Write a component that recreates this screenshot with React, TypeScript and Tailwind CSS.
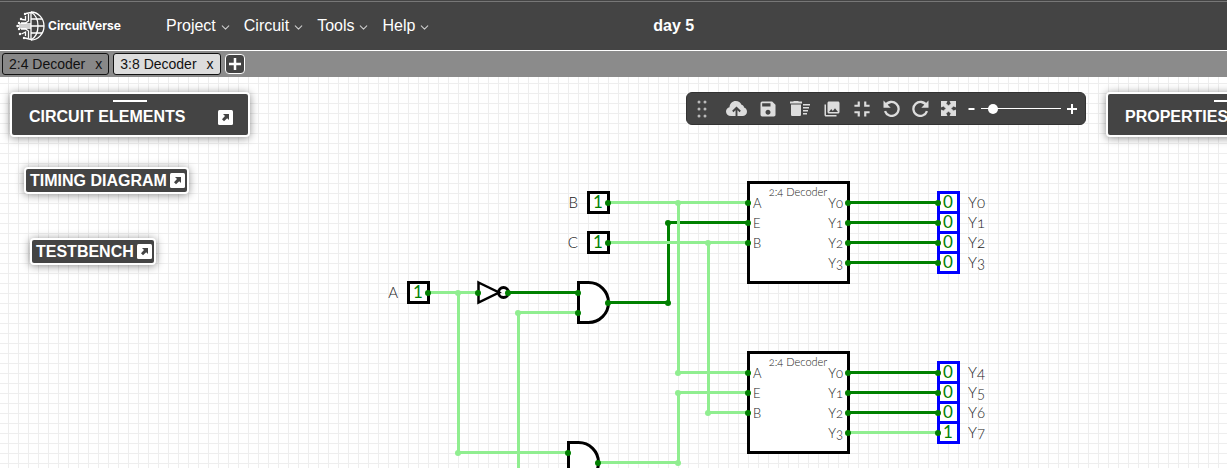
import React from "react";
import { FiChevronDown } from "react-icons/fi";
import { MdSave, MdPhotoLibrary, MdFullscreenExit } from "react-icons/md";

const ON = "#90ee90";
const OFF = "#008000";

function Logo() {
  return (
    <a href="#" className="flex items-center gap-[3px] text-white">
      <svg width="29" height="30" viewBox="0 0 29 30" fill="none" stroke="currentColor" strokeWidth="1.3">
        <path d="M15 1a13 14 0 0 1 0 28" />
        <path d="M15 1v28M15 1c5 3 7 8 7 14s-2 11-7 14" />
        <path d="M15 8h11M15 15h13M15 22h11" />
        <path d="M15 1.500l-5 1M12.500 3v7l-3 2H5M9.500 5v4L6 8.500M15 13H3M15 15H1M15 17H3M12.500 27v-7l-3-2H5M9.500 25v-4l-4 2M15 28.500l-6-1.500" />
        <g fill="currentColor" stroke="none">
          <circle cx="9" cy="3" r="1.200" /><circle cx="5" cy="8" r="1.200" /><circle cx="3" cy="12" r="1.200" />
          <circle cx="1.500" cy="15" r="1.200" /><circle cx="3" cy="18" r="1.200" /><circle cx="4" cy="23" r="1.200" />
          <circle cx="8" cy="27" r="1.200" />
        </g>
      </svg>
      <span className="font-[Inter,sans-serif] text-xs font-bold">CircuitVerse</span>
    </a>
  );
}

function Popout() {
  return (
    <button aria-label="Maximize" className="block">
      <svg width="15" height="15" viewBox="0 0 15 15">
        <rect width="15" height="15" rx="1.500" fill="#fff" />
        <path d="M5 4h6v6L9.200 8.200 6 11.200 4 9.200 7 6z" fill="#444" />
      </svg>
    </button>
  );
}

function Panel({ title, place }: { title: string; place: string }) {
  return (
    <section className={`absolute top-[15px] h-[45px] rounded border-2 border-white bg-[#444] shadow-[0_1px_8px_rgba(0,0,0,0.45)] ${place}`}>
      <div className="mx-auto mt-1.5 h-0.5 w-[34px] bg-white" />
      <div className="flex items-center justify-between pt-[5px] pr-[15px] pl-[17px]">
        <h2 className="text-base leading-5 font-bold text-white">{title}</h2>
        <Popout />
      </div>
    </section>
  );
}

function MiniPanel({ title, place }: { title: string; place: string }) {
  return (
    <section className={`absolute flex h-[27px] items-center gap-[3px] rounded border-2 border-white bg-[#444] pr-0.5 pl-1 shadow-[0_1px_8px_rgba(0,0,0,0.45)] ${place}`}>
      <h2 className="text-base leading-5 font-bold whitespace-nowrap text-white">{title}</h2>
      <Popout />
    </section>
  );
}

function CloudIcon() {
  return (
    <svg width="21" height="15" viewBox="0 0 21 15">
      <path d="M5 15C2 15 0 13 0 10.500 0 8.300 1.500 6.600 3.500 6.200 3.600 2.600 6.400 0 9.800 0c2.600 0 4.800 1.400 5.700 3.800C17.500 4.300 18 5.500 18 6.500c1.800.5 3 2 3 4.200 0 2.500-2 4.300-4.500 4.300z" fill="currentColor" />
      <path d="M10.500 15V7.500M6.800 10.500l3.700-3.700 3.700 3.700" fill="none" stroke="#444" strokeWidth="1.900" />
    </svg>
  );
}

function TrashIcon() {
  return (
    <svg width="20" height="15" viewBox="0 0 20 15" fill="currentColor">
      <path d="M0 0.500h3.500V0h5v.5H12v2H0zM1 3.500h10V13.500c0 1-.5 1.500-1.500 1.500h-7C1.500 15 1 14.500 1 13.500z" />
      <path d="M13 3h7v1.500h-7zM13 6h6v1.500h-6zM13 9h5v1.500h-5zM13 12h4v1.500h-4z" />
    </svg>
  );
}

function TurnIcon({ flip }: { flip?: boolean }) {
  return (
    <svg width="17" height="17" viewBox="0 0 17 17">
      <g transform={flip ? "translate(17 0) scale(-1 1)" : undefined}>
        <path d="M2.500 5.500A7 7 0 1 1 2 11.200" fill="none" stroke="currentColor" strokeWidth="2.300" />
        <path d="M0.500 0.500v7.200h7.200z" fill="currentColor" />
      </g>
    </svg>
  );
}

function ExpandIcon() {
  return (
    <svg width="15" height="15" viewBox="0 0 15 15">
      <path d="M0 0h6L5 2.500 7.500 5 10 2.500 9 0H15v6L12.500 5 10 7.500 12.500 10 15 9V15H9L10 12.500 7.500 10 5 12.500 6 15H0V9L2.500 10 5 7.500 2.500 5 0 6z" fill="currentColor" stroke="currentColor" strokeWidth="0.800" />
    </svg>
  );
}

function Tool({ label, width, children }: { label: string; width: string; children: React.ReactNode }) {
  return (
    <button aria-label={label} className={`flex h-full items-center justify-center ${width}`}>
      {children}
    </button>
  );
}

function Toolbar() {
  return (
    <div className="absolute top-[15px] left-[686px] flex h-[33px] w-[400px] items-center rounded-md border border-[#333] bg-[#444] pl-2.5 text-[#ddd]">
      <svg width="10" height="18" viewBox="0 0 10 18" fill="#bbb">
        {[2, 9, 16].map((y) => (
          <g key={y}>
            <circle cx="2" cy={y} r="1.500" />
            <circle cx="8" cy={y} r="1.500" />
          </g>
        ))}
      </svg>
      <div className="ml-[13px] flex h-full items-center">
        <Tool label="Save online" width="w-8"><CloudIcon /></Tool>
        <Tool label="Save offline" width="w-8"><MdSave size={20} /></Tool>
        <Tool label="Delete selected" width="w-8"><TrashIcon /></Tool>
        <Tool label="Download as image" width="w-8"><MdPhotoLibrary size={18} /></Tool>
        <Tool label="Fit to screen" width="w-7"><MdFullscreenExit size={26} /></Tool>
        <Tool label="Undo" width="w-[30px]"><TurnIcon /></Tool>
        <Tool label="Redo" width="w-7"><TurnIcon flip /></Tool>
        <Tool label="View" width="w-7"><ExpandIcon /></Tool>
      </div>
      <div className="ml-1.5 flex items-center gap-1.5 text-white">
        <button aria-label="Zoom out">
          <svg width="7" height="12" viewBox="0 0 7 12"><path d="M0.500 6h6" stroke="currentColor" strokeWidth="2" /></svg>
        </button>
        <input
          type="range"
          aria-label="Zoom"
          min={0}
          max={100}
          defaultValue={10}
          className="h-px w-20 appearance-none bg-white [&::-webkit-slider-thumb]:size-2.5 [&::-webkit-slider-thumb]:appearance-none [&::-webkit-slider-thumb]:rounded-full [&::-webkit-slider-thumb]:bg-white"
        />
        <button aria-label="Zoom in">
          <svg width="10" height="12" viewBox="0 0 10 12"><path d="M0 6h10M5 1v10" stroke="currentColor" strokeWidth="2" /></svg>
        </button>
      </div>
    </div>
  );
}

type Point = [number, number];

function Wire({ points, on }: { points: Point[]; on?: boolean }) {
  return (
    <polyline
      points={points.map(([x, y]) => `${x + 0.5},${y - 0.5}`).join(" ")}
      fill="none"
      stroke={on ? ON : OFF}
      strokeWidth="3"
    />
  );
}

function Dots({ at, on }: { at: Point[]; on?: boolean }) {
  return (
    <g fill={on ? ON : OFF}>
      {at.map(([x, y]) => <circle key={`${x}-${y}`} cx={x} cy={y} r="3" />)}
    </g>
  );
}

function Bit({ x, y, value, label, output }: { x: number; y: number; value: number; label: string; output?: boolean }) {
  return (
    <g>
      <rect x={x - 9.5} y={y - 10.5} width="20" height="20" fill="#fff" stroke={output ? "#00f" : "#000"} strokeWidth="3" />
      <text x={x} y={y + 5} textAnchor="middle" fill={OFF} className="text-[17px]">{value}</text>
      <text x={output ? x + 20 : x - 20} y={y + 5} textAnchor={output ? "start" : "end"} fill="#222" className="text-[15px] font-light oldstyle-nums">{label}</text>
      <Dots at={[[output ? x - 10 : x + 10, y]]} />
    </g>
  );
}

function AndGate({ x, y }: { x: number; y: number }) {
  return (
    <g>
      <path d={`M${x - 9.5} ${y - 20.5}h10a20 20 0 0 1 0 40h-10z`} fill="#fff" stroke="#000" strokeWidth="3" />
      <Dots at={[[x - 10, y - 10], [x - 10, y + 10], [x + 20, y]]} />
    </g>
  );
}

function Decoder({ y }: { y: number }) {
  return (
    <g>
      <rect x="740.5" y={y - 20.5} width="100" height="100" fill="#fff" stroke="#000" strokeWidth="3" />
      <g fill="#222" className="font-light oldstyle-nums">
        <text x="790" y={y - 7} textAnchor="middle" className="text-[11px]">2:4 Decoder</text>
        {["A", "E", "B"].map((pin, i) => (
          <text key={pin} x="745" y={y + 5 + i * 20} className="text-[13px]">{pin}</text>
        ))}
        {["Y0", "Y1", "Y2", "Y3"].map((pin, i) => (
          <text key={pin} x="835" y={y + 5 + i * 20} textAnchor="end" className="text-[13px]">{pin}</text>
        ))}
      </g>
      <Dots at={[[740, y], [740, y + 20], [740, y + 40], [840, y], [840, y + 20], [840, y + 40], [840, y + 60]]} />
    </g>
  );
}

function Circuit() {
  return (
    <svg width="100%" height="100%" className="block font-[Lato,sans-serif]" role="img" aria-label="3:8 decoder circuit">
      <defs>
        <pattern id="grid" x="8" y="6" width="10" height="10" patternUnits="userSpaceOnUse">
          <path d="M0 0.500h10M0.500 0v10" stroke="#eeeeee" />
        </pattern>
      </defs>
      <rect width="100%" height="100%" fill="url(#grid)" />
      <g transform="translate(8 6)">
        <Wire points={[[660, 220], [660, 140], [740, 140]]} />
        <Wire points={[[600, 220], [660, 220]]} />
        <Wire points={[[500, 210], [570, 210]]} />
        <Wire on points={[[420, 210], [470, 210]]} />
        <Wire on points={[[450, 210], [450, 370], [560, 370]]} />
        <Wire on points={[[510, 600], [510, 230], [570, 230]]} />
        <Wire on points={[[600, 120], [740, 120]]} />
        <Wire on points={[[670, 120], [670, 290], [740, 290]]} />
        <Wire on points={[[600, 160], [740, 160]]} />
        <Wire on points={[[700, 160], [700, 330], [740, 330]]} />
        <Wire on points={[[590, 380], [670, 380], [670, 310], [740, 310]]} />
        {[120, 140, 160, 180, 290, 310, 330, 350].map((y) => (
          <Wire key={y} on={y === 350} points={[[840, y], [930, y]]} />
        ))}
        <Dots on at={[[450, 210], [510, 230], [670, 120], [700, 160], [670, 290], [700, 330], [450, 370], [670, 380], [670, 310]]} />
        <Dots at={[[660, 220], [660, 140]]} />

        <path d="M470.500 199.500L491 209.500 470.500 219.500z" fill="#fff" stroke="#000" strokeWidth="2.500" />
        <circle cx="495.500" cy="209.500" r="5" fill="none" stroke="#000" strokeWidth="3" />
        <Dots at={[[470, 210], [500, 210]]} />
        <AndGate x={580} y={220} />
        <AndGate x={570} y={380} />

        <Bit x={410} y={210} value={1} label="A" />
        <Bit x={590} y={120} value={1} label="B" />
        <Bit x={590} y={160} value={1} label="C" />
        <Decoder y={120} />
        <Decoder y={290} />
        {[0, 1, 2, 3].map((n) => <Bit key={n} output x={940} y={120 + n * 20} value={0} label={`Y${n}`} />)}
        {[4, 5, 6, 7].map((n) => <Bit key={n} output x={940} y={210 + n * 20} value={n === 7 ? 1 : 0} label={`Y${n}`} />)}
      </g>
    </svg>
  );
}

function Tab({ name, active }: { name: string; active?: boolean }) {
  return (
    <div className={`flex h-[22px] items-center gap-2.5 rounded-[3px] border border-[#111] px-1.5 ${active ? "bg-[#ddd]" : "bg-[#888]"}`}>
      <button>{name}</button>
      <button aria-label={`Close ${name}`}>x</button>
    </div>
  );
}

export default function App() {
  return (
    <div className="flex h-screen flex-col overflow-hidden bg-white font-['Liberation_Sans',Arial,sans-serif]">
      <div className="h-px shrink-0 bg-[#444]" />
      <header className="flex h-[50px] shrink-0 items-center border-t border-b border-t-[#777] border-b-white bg-[#444] pl-4">
        <Logo />
        <nav className="ml-[45px] flex gap-3 text-base text-white">
          {["Project", "Circuit", "Tools", "Help"].map((item) => (
            <button key={item} className="flex items-center gap-[3px]">
              {item}
              <FiChevronDown size={13} className="mt-0.5 text-[#ccc]" />
            </button>
          ))}
        </nav>
        <h1 className="mr-[311px] flex-1 text-center text-base font-bold text-white">day 5</h1>
      </header>
      <div className="flex h-[26px] shrink-0 items-center gap-1 bg-[#8b8b8b] pl-0.5 text-sm text-[#111]">
        <Tab name="2:4 Decoder" />
        <Tab name="3:8 Decoder" active />
        <button aria-label="New circuit" className="flex size-5 items-center justify-center rounded border border-white bg-[#444]">
          <svg width="12" height="12" viewBox="0 0 12 12"><path d="M0 6h12M6 0v12" stroke="#fff" strokeWidth="2.500" /></svg>
        </button>
      </div>
      <main className="relative min-h-0 flex-1 overflow-hidden">
        <Circuit />
        <Panel title="CIRCUIT ELEMENTS" place="left-2.5 w-60" />
        <MiniPanel title="TIMING DIAGRAM" place="top-[90px] left-6" />
        <MiniPanel title="TESTBENCH" place="top-[161px] left-[30px]" />
        <Toolbar />
        <Panel title="PROPERTIES" place="left-[1106px] w-[250px]" />
      </main>
    </div>
  );
}
